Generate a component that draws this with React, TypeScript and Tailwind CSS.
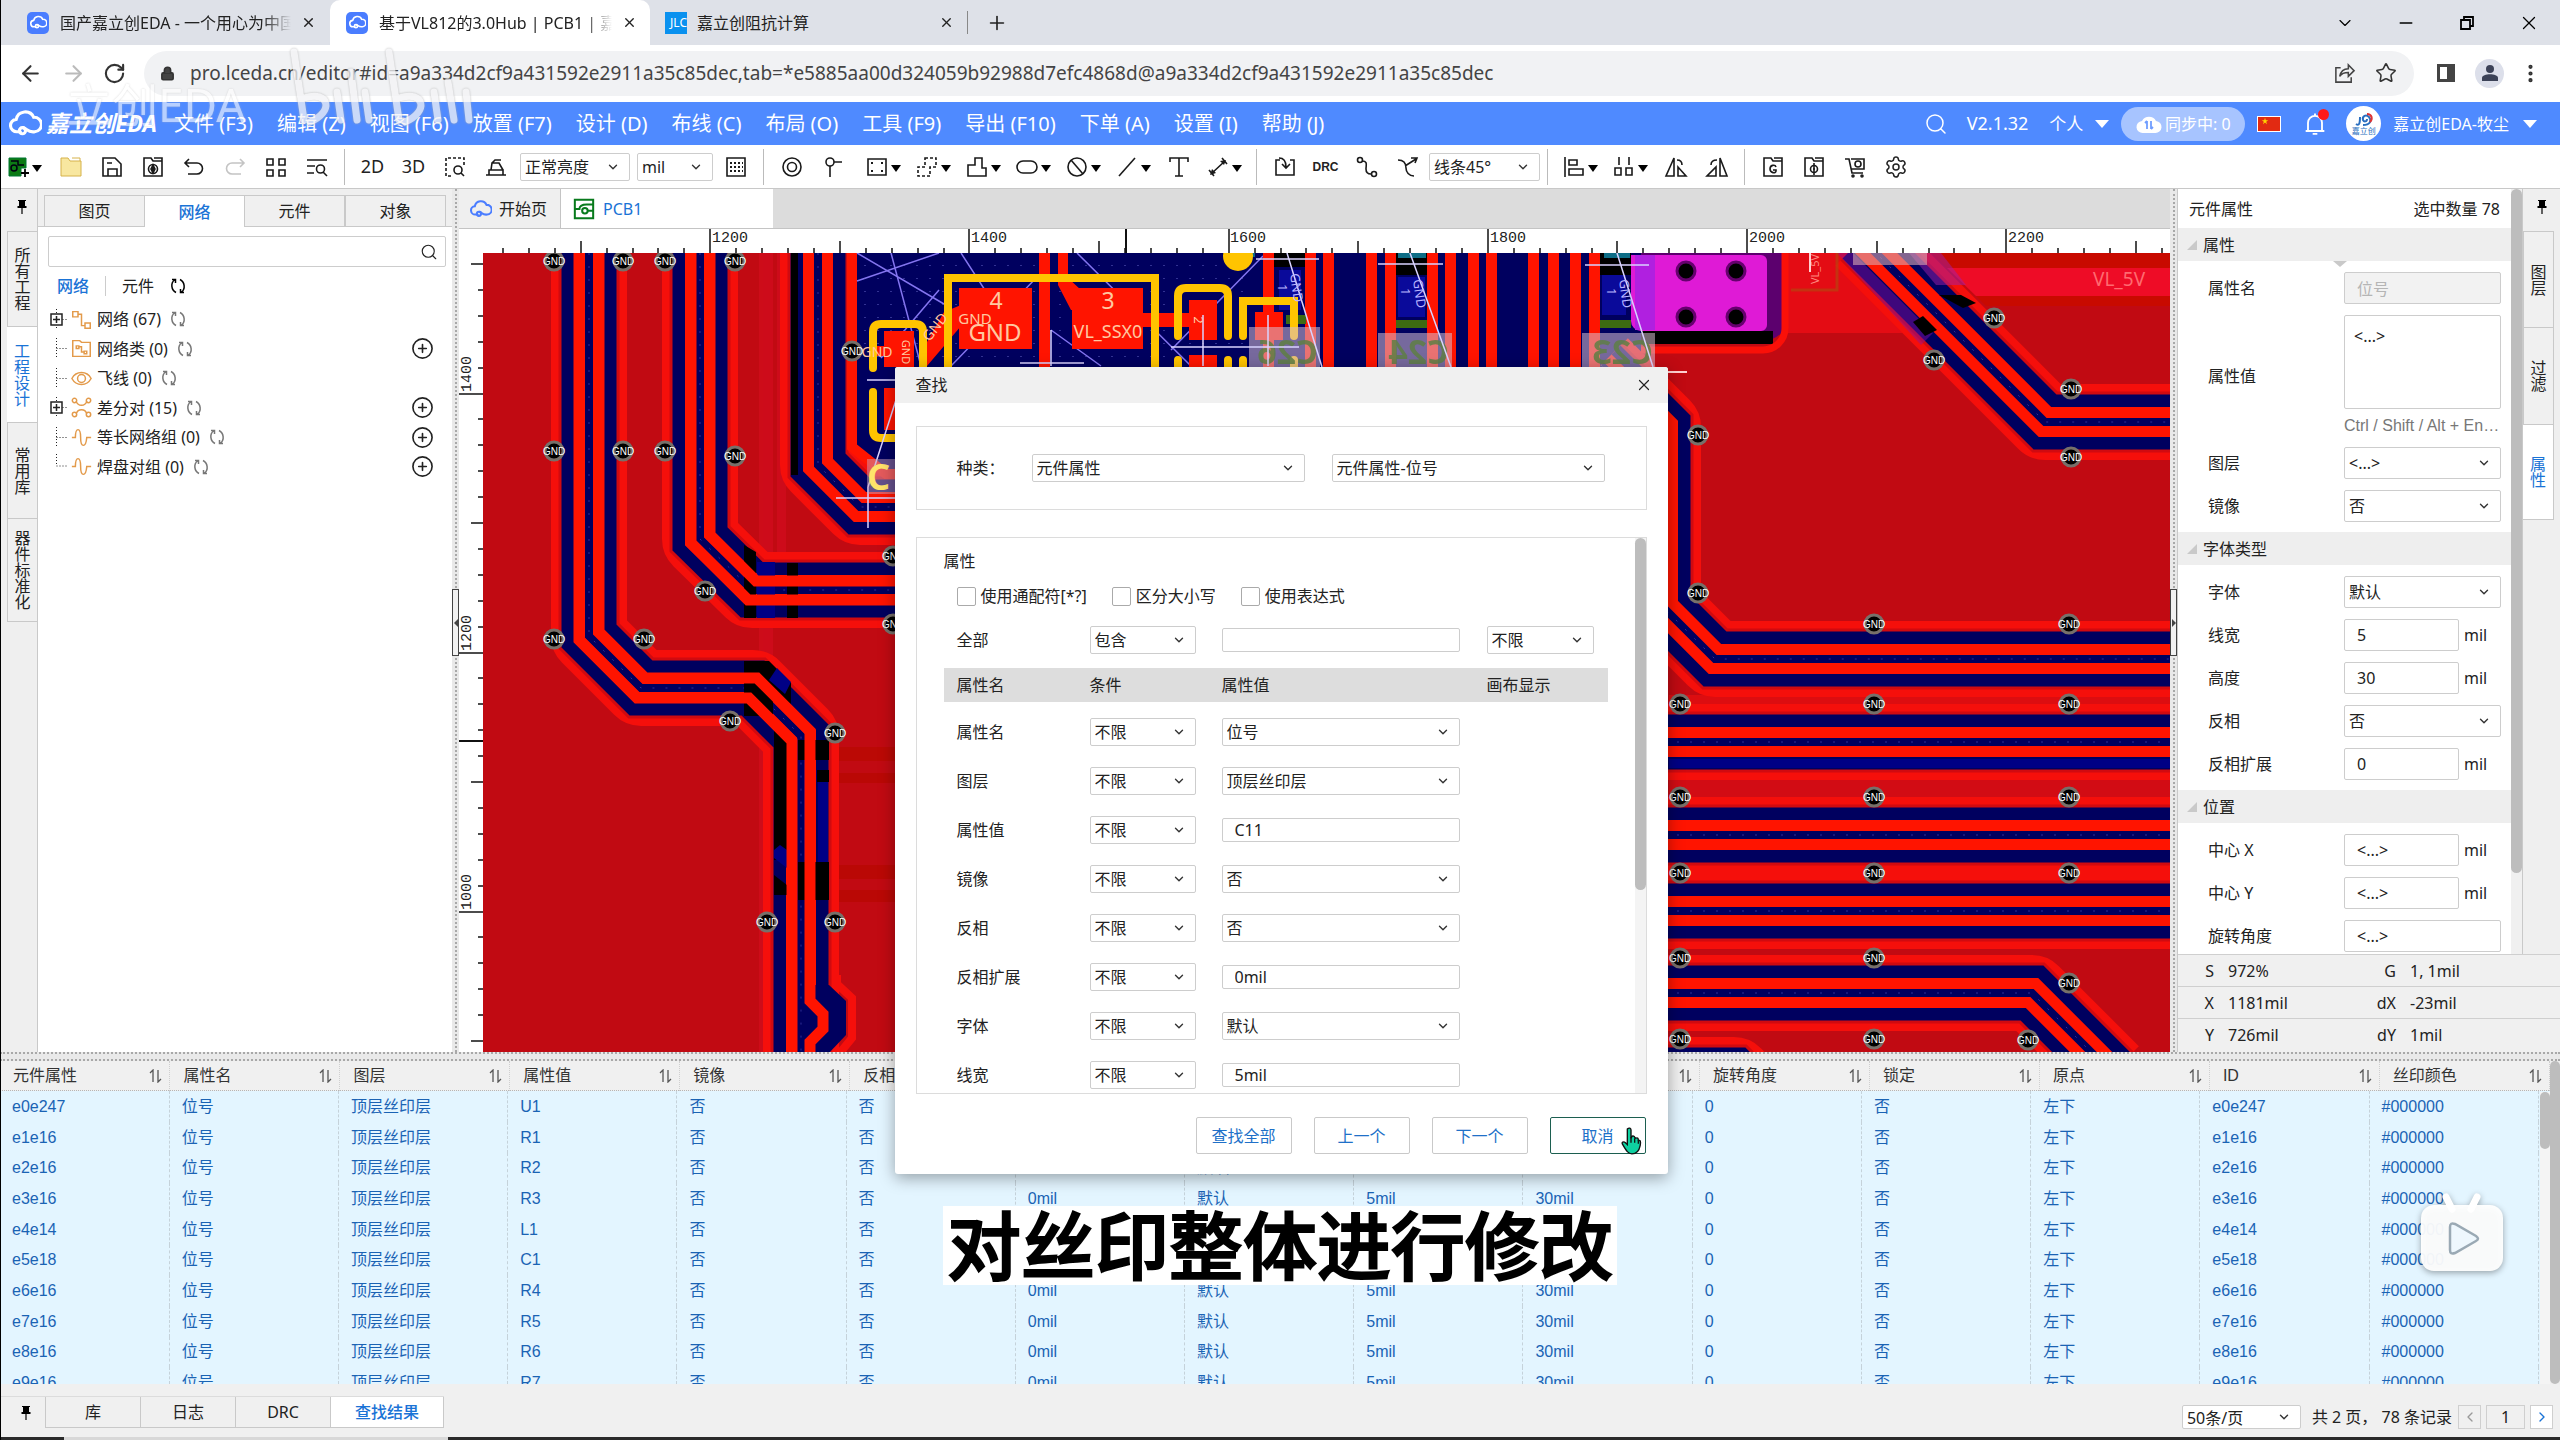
import React from "react";
import {
  ArrowLeft, ArrowRight, RotateCw, Lock, X, Plus, ChevronDown, ChevronLeft, ChevronRight,
  Minus, Star, Search, Settings, MoreVertical, CirclePlus,
} from "lucide-react";

const UI = "font-['Noto_Sans','Noto_Sans_CJK_SC',sans-serif]";
const ARIAL = "font-['Liberation_Sans','Noto_Sans_CJK_SC',sans-serif]";

/* ---------- small shared parts ---------- */

function Ic({ children, w = 24, c = "text-[#1a1a1a]", sw = 1.6 }: { children: React.ReactNode; w?: number; c?: string; sw?: number }) {
  return (
    <svg width={w} height={w} viewBox="0 0 24 24" fill="none" stroke="currentColor" strokeWidth={sw} className={"shrink-0 " + c}>
      {children}
    </svg>
  );
}

function Sel({ value, label, className = "", pad = "pl-[4px]", chev = "right-[10px]" }: { value: string; label: string; className?: string; pad?: string; chev?: string }) {
  return (
    <div className={"relative shrink-0 " + className}>
      <select aria-label={label} className={"h-full w-full appearance-none rounded-[2px] border border-[#cdcdcd] bg-white outline-none " + pad}>
        <option>{value}</option>
      </select>
      <ChevronDown size={14} strokeWidth={2.4} className={"pointer-events-none absolute top-1/2 -mt-[7px] text-[#333] " + chev} />
    </div>
  );
}

function Cloud({ w = 32, c = "text-white" }: { w?: number; c?: string }) {
  return (
    <svg width={w} height={w} viewBox="0 0 32 32" fill="none" stroke="currentColor" strokeWidth="3" className={"shrink-0 " + c}>
      <path d="M11 24H8a6 6 0 0 1-1-12 9 9 0 0 1 17-2 7 7 0 0 1 1 14c-6 1-7-2-11-4" strokeLinecap="round" />
      <circle cx="13" cy="23" r="3" />
    </svg>
  );
}

function Pin() {
  return (
    <svg width="10" height="16" viewBox="0 0 10 16" className="text-black"><path d="M1 1h8v1H8v5h1.500v2H5.600v6H4.400V9H.5V7H2V2H1z" fill="currentColor" /></svg>
  );
}

function Refresh({ dark = false }: { dark?: boolean }) {
  return (
    <svg width="18" height="18" viewBox="0 0 18 18" fill="none" stroke="currentColor" strokeWidth="1.500" className={dark ? "text-black" : "text-[#777]"}>
      <path d="M7 15.500C2 13 1.500 6 5.500 3M3 2.500h3.500V6M11 2.500c5 2.500 5.500 9.500 1.500 12.500M15 15.500h-3.500V12" />
    </svg>
  );
}

/* ---------- browser chrome ---------- */

function BrowserTabs() {
  return (
    <div className="flex h-[45px] shrink-0 bg-[#dee1e8] text-[16px] text-[#222]">
      <div className="flex w-[330px] items-center pl-[27px] pr-[14px]">
        <span className="flex size-[22px] items-center justify-center rounded-[5px] bg-[#4a7dff]"><Cloud w={17} /></span>
        <span className="ml-[11px] flex-1 overflow-hidden whitespace-nowrap [mask-image:linear-gradient(90deg,#000_88%,transparent)]">国产嘉立创EDA - 一个用心为中国人</span>
        <button aria-label="关闭标签" className="ml-[10px]"><X size={15} strokeWidth={2.200} /></button>
      </div>
      <div className="flex w-[320px] items-center rounded-t-[10px] bg-white pl-[16px] pr-[13px]">
        <span className="flex size-[22px] items-center justify-center rounded-[5px] bg-[#4a7dff]"><Cloud w={17} /></span>
        <span className="ml-[11px] flex-1 overflow-hidden whitespace-nowrap [mask-image:linear-gradient(90deg,#000_88%,transparent)]">基于VL812的3.0Hub | PCB1 | 嘉立创</span>
        <button aria-label="关闭标签" className="ml-[10px]"><X size={15} strokeWidth={2.200} /></button>
      </div>
      <div className="flex w-[318px] items-center border-r border-[#888] [border-image:linear-gradient(transparent_25%,#888_25%,#888_75%,transparent_75%)_1] pl-[15px] pr-[13px]">
        <span className="flex h-[22px] w-[22px] items-center justify-end overflow-hidden bg-[#0a91ef] text-[12px] text-white">JLC</span>
        <span className="ml-[10px] flex-1 whitespace-nowrap">嘉立创阻抗计算</span>
        <button aria-label="关闭标签"><X size={15} strokeWidth={2.200} /></button>
      </div>
      <button aria-label="新标签" className="ml-[18px]"><Plus size={22} strokeWidth={1.800} /></button>
      <div className="ml-auto flex items-center gap-[41px] pr-[20px] text-black">
        <button aria-label="标签列表"><ChevronDown size={20} strokeWidth={1.400} /></button>
        <button aria-label="最小化"><Minus size={20} strokeWidth={1.600} /></button>
        <button aria-label="还原">
          <svg width="20" height="20" viewBox="0 0 20 20" fill="none" stroke="currentColor" strokeWidth="1.800"><path d="M4 7h9v9H4zM7 7V4h9v9h-3" /></svg>
        </button>
        <button aria-label="关闭"><X size={22} strokeWidth={1.400} /></button>
      </div>
    </div>
  );
}

function AddressBar() {
  return (
    <div className="flex h-[57px] shrink-0 items-center bg-white pb-[1px] pl-[18px] pr-[18px] text-[#333]">
      <button aria-label="后退"><ArrowLeft size={25} strokeWidth={2} /></button>
      <button aria-label="前进" className="ml-[18px] text-[#bbb]"><ArrowRight size={25} strokeWidth={2} /></button>
      <button aria-label="刷新" className="ml-[17px]"><RotateCw size={23} strokeWidth={2.200} /></button>
      <div className="ml-[18px] flex h-[45px] flex-1 items-center rounded-full bg-[#f1f2f4] pl-[16px] pr-[17px]">
        <Lock size={15} fill="#444" strokeWidth={2.600} />
        <input
          aria-label="网址"
          className="ml-[15px] h-full min-w-0 flex-1 bg-transparent text-[19px] text-[#444] outline-none"
          defaultValue="pro.lceda.cn/editor#id=a9a334d2cf9a431592e2911a35c85dec,tab=*e5885aa00d324059b92988d7efc4868d@a9a334d2cf9a431592e2911a35c85dec"
        />
        <button aria-label="分享" className="mr-[19px]">
          <Ic c="text-[#444]" w={23}><path d="M8 6H3v15h16v-5M7 15c1-5 4-8 9-8V3l6 6-6 6v-4c-4 0-7 1-9 4z" /></Ic>
        </button>
        <button aria-label="收藏"><Star size={22} strokeWidth={1.700} /></button>
      </div>
      <svg width="20" height="20" viewBox="0 0 20 20" className="ml-[22px] text-[#444]"><path d="M1 1h18v18H1z" fill="currentColor" /><path d="M4 4h7v12H4z" fill="white" /></svg>
      <span className="ml-[19px] flex size-[29px] items-center justify-center rounded-full bg-[#dcdfea]">
        <svg width="18" height="18" viewBox="0 0 18 18" className="text-[#3c4257]"><circle cx="9" cy="5" r="4" fill="currentColor" /><path d="M1 17v-3c0-5 16-5 16 0v3z" fill="currentColor" /></svg>
      </span>
      <button aria-label="菜单" className="ml-[15px]"><MoreVertical size={23} strokeWidth={2.400} /></button>
    </div>
  );
}

/* ---------- application bars ---------- */

const menus = ["文件 (F3)", "编辑 (Z)", "视图 (F6)", "放置 (F7)", "设计 (D)", "布线 (C)", "布局 (O)", "工具 (F9)", "导出 (F10)", "下单 (A)", "设置 (I)", "帮助 (J)"];

function MenuBar() {
  return (
    <header className="flex h-[43px] shrink-0 items-center bg-[#4f8aff] pl-[9px] pr-[23px] text-white">
      <Cloud w={33} />
      <span className="ml-[4px] w-[128px] whitespace-nowrap text-[23px] font-bold italic">嘉立创EDA</span>
      <nav className="flex gap-[24px] text-[20px]">
        {menus.map((m) => <button key={m} className="whitespace-nowrap">{m}</button>)}
      </nav>
      <div className="ml-auto flex items-center text-[17px]">
        <Search size={24} strokeWidth={1.500} className="mr-[19px]" />
        <span className="text-[18px]">V2.1.32</span>
        <button className="ml-[21px] flex items-center gap-[12px]">个人 <span className="border-x-[7px] border-t-[8px] border-x-transparent border-t-white" /></button>
        <span className="ml-[12px] flex h-[34px] w-[124px] items-center justify-center rounded-full bg-[#a7c4ff] text-[16px]">
          <svg width="26" height="22" viewBox="0 0 26 22" className="mr-[3px]">
            <path d="M7 20a6 6 0 0 1-1-12 8 8 0 0 1 14 0 6 6 0 0 1-1 12z" fill="white" />
            <path d="M11 8v8m-2-6 2-2M15 16V8m2 6-2 2" stroke="#6f9dff" strokeWidth="1.800" fill="none" />
          </svg>
          同步中: 0
        </span>
        <span className="ml-[12px] flex h-[16px] w-[24px] border border-white bg-[#e22a12] pl-[3px]"><svg width="8" height="8" viewBox="0 0 10 10"><path d="M5 1l1 3h3L6.500 6l1 3L5 7 2.500 9l1-3L1 4h3z" fill="#ffd500" /></svg></span>
        <span className="relative ml-[20px]">
          <Ic c="text-white" w={28}><path d="M4 18h16M6 18v-7a6 6 0 0 1 12 0v7M10 20.500h4M12 3v2" /></Ic>
          <span className="absolute -top-[1px] right-0 size-[11px] rounded-full bg-[#ff1a1a]" />
        </span>
        <span className="ml-[17px] flex size-[35px] flex-col items-center justify-center rounded-full bg-white leading-none text-[#2b6fc0]">
          <svg width="20" height="14" viewBox="0 0 20 14" fill="none" strokeWidth="2"><path d="M2 11c3 2 4 0 4-7M9 12c7 0 9-4 6-8-3-3-7-1-6 3 1 2 4 2 4-1" stroke="#2b6fc0" /><path d="M13 1c5 0 6 5 3 8" stroke="#d33" /></svg>
          <span className="text-[8px]">嘉立创</span>
        </span>
        <button className="ml-[12px] flex items-center gap-[14px] whitespace-nowrap text-[16px]">嘉立创EDA-牧尘 <span className="border-x-[7px] border-t-[8px] border-x-transparent border-t-white" /></button>
      </div>
    </header>
  );
}

function Tool({ label, drop = false, children }: { label: string; drop?: boolean; children: React.ReactNode }) {
  return (
    <button aria-label={label} className={drop ? "flex h-full w-[50px] shrink-0 items-center justify-center" : "flex h-full w-[41px] shrink-0 items-center justify-center"}>
      {children}
      {drop && <span className="mt-[4px] ml-[2px] border-x-[5px] border-t-[7px] border-x-transparent border-t-black" />}
    </button>
  );
}

const Sep = () => <span className="mx-[7px] h-[36px] w-px shrink-0 bg-[#bbb]" />;

function Toolbar() {
  return (
    <div className="flex h-[44px] shrink-0 items-center border-b border-[#c8c8c8] bg-white text-[16px] text-[#222]">
      <Tool label="新建" drop>
        <svg width="22" height="22" viewBox="0 0 22 22" fill="none"><path d="M1 2h17v10h-5v8H1z" fill="#0c7a14" stroke="#073" /><circle cx="6" cy="12" r="3" stroke="#001" strokeWidth="1.500" /><path d="M3 5h7v4h6" stroke="#001" strokeWidth="1.500" /><path d="M17 13v8M13 17h8" stroke="#000" strokeWidth="1.800" /></svg>
      </Tool>
      <Tool label="打开"><svg width="22" height="22" viewBox="0 0 22 22"><path d="M1 2h7l2 3h11v15H1z" fill="#f8e7a0" stroke="#d6b24a" /><path d="M12 2h8v3" fill="none" stroke="#d6b24a" /></svg></Tool>
      <Tool label="保存"><Ic><path d="M3 3h12l6 6v12H3zM8 21v-7h9v7M7 8h5" /></Ic></Tool>
      <Tool label="工程另存"><Ic><path d="M3 21V3h7l2 3h9v15zM13 3h8v3" /><circle cx="12" cy="14" r="4.500" /><path d="M12 10l2 4-2 4-2-4z" fill="currentColor" /></Ic></Tool>
      <Tool label="撤销"><Ic><path d="M7 4 3 8l4 4M3 8h12a5 5 0 0 1 0 11H6" /></Ic></Tool>
      <Tool label="重做"><Ic c="text-[#c4c4c4]"><path d="m17 4 4 4-4 4M21 8H9a5 5 0 0 0 0 11h9" /></Ic></Tool>
      <Tool label="布局网格"><Ic><path d="M3 4h6v6H3zM15 4h6v6h-6zM3 15h6v6H3zM15 15h6v6h-6z" /></Ic></Tool>
      <Tool label="查找"><Ic><path d="M2 5h20M2 11h8M2 18h7" /><circle cx="15.500" cy="14" r="4" /><path d="m18 17 4 4" /></Ic></Tool>
      <Sep />
      <Tool label="二维"><span className="text-[18px]">2D</span></Tool>
      <Tool label="三维"><span className="text-[18px]">3D</span></Tool>
      <Tool label="框选查找"><Ic><path d="M8 21H3V3h18v7" strokeDasharray="3 2" /><circle cx="15" cy="15" r="4" /><path d="m18 18 3 3" /></Ic></Tool>
      <Tool label="擦除"><Ic><path d="M2 20h20M5 20v-5h14v5M7 15l1-7h7l4 7M8 8l3-3h6" /></Ic></Tool>
      <Sel label="亮度" value="正常亮度" className="ml-[4px] h-[28px] w-[110px]" />
      <Sel label="单位" value="mil" className="ml-[7px] mr-[2px] h-[28px] w-[76px]" />
      <Tool label="网格"><Ic><path d="M3 3h18v18H3z" /><path d="M6 8h13M6 12h13M6 16h13" strokeDasharray="2 2" strokeWidth="2" /></Ic></Tool>
      <Sep />
      <Tool label="焊盘"><Ic><circle cx="12" cy="12" r="9" /><circle cx="12" cy="12" r="4.500" /></Ic></Tool>
      <Tool label="过孔"><Ic><circle cx="9" cy="7" r="4" /><path d="M13 7h8M9 11v11" /></Ic></Tool>
      <span className="w-[5px] shrink-0" />
      <Tool label="铺铜" drop><Ic><path d="M3 4h18v16H3z" /><path d="M6 7h2v2H6zM16 7h2v2h-2zM6 15h2v2H6zM16 15h2v2h-2z" fill="currentColor" stroke="none" /></Ic></Tool>
      <Tool label="禁止区域" drop><Ic><path d="M10 3h11v9h-6v9H3v-9h7z" strokeDasharray="3 2" /></Ic></Tool>
      <Tool label="板框" drop><Ic><path d="M3 21V10h7V3h7v10h4v8z" /></Ic></Tool>
      <Tool label="槽" drop><Ic><rect x="2" y="6" width="20" height="12" rx="6" /></Ic></Tool>
      <Tool label="禁布" drop><Ic><circle cx="12" cy="12" r="9" /><path d="m6 5 12 14" /></Ic></Tool>
      <Tool label="线" drop><Ic><path d="M4 21 20 3" /></Ic></Tool>
      <Tool label="文本"><Ic><path d="M3 7V3h18v4M12 3v18M8 21h8" /></Ic></Tool>
      <Tool label="尺寸" drop><Ic><path d="M5 19 19 6M3 15l5 6M16 3l5 6" /><path d="M4 20l2-6 4 4zM20 5l-6 1 4 4z" fill="currentColor" stroke="none" /></Ic></Tool>
      <Sep />
      <Tool label="导入"><Ic><path d="M7 5H3v15h18V5h-4M6 3c5 0 7 3 7 9M9 9l4 4 4-4" /></Ic></Tool>
      <Tool label="设计规则检查"><span className="font-['Liberation_Sans'] text-[12px] font-bold">DRC</span></Tool>
      <Tool label="网络"><Ic><circle cx="5" cy="5" r="2.500" /><circle cx="19" cy="19" r="2.500" /><path d="M7 6c6 0 4 4 4 8s2 5 5 5" /></Ic></Tool>
      <Tool label="扇出"><Ic><path d="M2 5c6 0 8 4 8 8s3 8 8 8M9 11 20 4M15 3l6 0-2 5" /></Ic></Tool>
      <Sel label="走线角度" value="线条45°" className="ml-px h-[28px] w-[111px]" />
      <Sep />
      <Tool label="对齐" drop><Ic><path d="M3 2v20M7 5h8v5H7zM7 14h14v6H7z" /></Ic></Tool>
      <Tool label="分布" drop><Ic><path d="M7 2v8M17 2v8M3 13h6v7H3zM14 13h6v7h-6z" /></Ic></Tool>
      <Tool label="左右翻转"><Ic><path d="M10 3v18H2zM14 12v9h8zM13 5c4 0 5 2 5 5" /></Ic></Tool>
      <Tool label="上下翻转"><Ic><path d="M15 3v18h7zM11 12v9H2zM6 10c0-3 2-5 6-5" /></Ic></Tool>
      <Sep />
      <Tool label="导出Gerber"><Ic><path d="M3 21V3h7l2 3h9v15zM13 3h8v3" /><path d="M15 12c-1-3-6-2-6 2s6 5 6 2v-1h-3" /></Ic></Tool>
      <Tool label="坐标文件"><Ic><path d="M3 21V3h7l2 3h9v15zM13 3h8v3" /><circle cx="12" cy="14" r="3.500" /><path d="M12 8v12M11 14h2" /></Ic></Tool>
      <Tool label="下单"><Ic><path d="M2 4h4l3 14h11M8 4h13v10H8" /><circle cx="15" cy="9" r="3" /><circle cx="10" cy="21" r="1" /><circle cx="19" cy="21" r="1" /></Ic></Tool>
      <Tool label="设置"><Settings size={24} strokeWidth={1.500} /></Tool>
    </div>
  );
}

/* ---------- left dock ---------- */

function SideTab({ text, active = false, size }: { text: string; active?: boolean; size: string }) {
  return (
    <button className={"flex w-full items-center justify-center border-[#c9c9c9] leading-[16px] " + size + (active ? " border-b bg-white text-[#1a73d6]" : " border-b border-l bg-[#f0f0f0] text-[#222]")}>
      <span className="w-[16px] break-all text-[16px]">{text}</span>
    </button>
  );
}

type Node = { label: string; icon: React.ReactNode; plus?: boolean; expand?: boolean };
const tree: Node[] = [
  { label: "网络 (67)", expand: true, icon: <path d="M2 3h6v6H2zM16 16h6v6h-6zM8 6h4v13h4" /> },
  { label: "网络类 (0)", plus: true, icon: <path d="M2 21V3h8l2 2h10v16zM6 9h3v3H6zM15 15h3v3h-3zM9 10h3v6h3" /> },
  { label: "飞线 (0)", icon: <><path d="M1 12c5-9 17-9 22 0-5 9-17 9-22 0z" /><circle cx="12" cy="12" r="4.500" /></> },
  { label: "差分对 (15)", plus: true, expand: true, icon: <><circle cx="4" cy="4" r="2.500" /><circle cx="20" cy="4" r="2.500" /><circle cx="4" cy="20" r="2.500" /><circle cx="20" cy="20" r="2.500" /><path d="M6 5c2 6 10 6 12 0M6 19c2-6 10-6 12 0" /></> },
  { label: "等长网络组 (0)", plus: true, icon: <path d="M1 12h4c0-12 6-12 6 0s6 12 7 0h5" /> },
  { label: "焊盘对组 (0)", plus: true, icon: <path d="M1 12h4c0-12 6-12 6 0s6 12 7 0h5" /> },
];

function LeftDock() {
  return (
    <aside className="flex w-[452px] shrink-0 bg-[#efefef] text-[16px] text-[#222]">
      <div className="flex w-[38px] flex-col border-r border-[#c9c9c9] pl-[7px]">
        <div className="flex h-[43px] items-center justify-center border-b border-[#c9c9c9] pb-[6px]"><Pin /></div>
        <SideTab text="所有工程" size="h-[95px]" />
        <SideTab text="工程设计" size="h-[96px]" active />
        <SideTab text="常用库" size="h-[96px]" />
        <SideTab text="器件标准化" size="h-[103px]" />
      </div>
      <div className="flex flex-1 flex-col">
        <div className="flex h-[38px] items-end border-b border-[#c9c9c9] px-[6px]">
          {["图页", "网络", "元件", "对象"].map((t) => (
            <button key={t} className={t === "网络" ? "-mb-px h-[32px] flex-1 border-t border-[#c9c9c9] bg-white font-medium text-[#1a73d6]" : "h-[31px] flex-1 border-x border-t border-[#c9c9c9] bg-[#f0f0f0]"}>{t}</button>
          ))}
        </div>
        <div className="flex-1 bg-white pl-[10px] pr-[6px] pt-[9px]">
          <div className="flex h-[31px] items-center rounded-[2px] border border-[#cdcdcd] pr-[7px]">
            <input aria-label="搜索网络" className="h-full flex-1 px-2 outline-none" />
            <Search size={18} strokeWidth={1.500} />
          </div>
          <div className="flex h-[37px] items-center pl-[9px]">
            <button className="font-medium text-[#1a73d6]">网络</button>
            <span className="mx-[16px] h-[20px] w-px bg-[#ccc]" />
            <button>元件</button>
            <button aria-label="刷新" className="ml-[15px]"><Refresh dark /></button>
          </div>
          <ul>
            {tree.map((n, i) => (
              <li key={n.label} className={"flex items-center " + (i % 2 ? "h-[29px]" : "h-[30px]")}>
                <span className="flex h-full w-[23px] items-center">
                  <svg width="23" height="29" viewBox="0 0 23 29" fill="none" stroke="#222">
                    <path d={i === 5 ? "M8.500 2v12H20" : "M8.500 4v21M8.500 14.500H20"} strokeDasharray="1 2" />
                    {n.expand && <><rect x="3" y="9" width="11" height="11" fill="white" strokeWidth="1.500" /><path d="M5 14.500h7M8.500 11v7" strokeWidth="1.500" /></>}
                  </svg>
                </span>
                <Ic w={21} c="text-[#e39a4a]" sw={1.700}>{n.icon}</Ic>
                <span className="ml-[5px] mr-[8px]">{n.label}</span>
                <Refresh />
                {n.plus && <button aria-label="新建" className="ml-auto mr-[12px]"><CirclePlus size={23} strokeWidth={1.700} /></button>}
              </li>
            ))}
          </ul>
        </div>
      </div>
    </aside>
  );
}

function Splitter({ arrow }: { arrow: "l" | "r" }) {
  return (
    <div className="relative w-[7px] shrink-0 bg-[#e9e9e9]">
      <div className="mx-auto h-full w-0 border-l-2 border-dotted border-[#a8a8a8]" />
      <div className="absolute inset-x-0 top-[400px] flex h-[67px] items-center justify-center border border-[#444] bg-[#f2f2f2]">
        <span className={arrow === "l" ? "border-y-4 border-r-4 border-y-transparent border-r-[#444]" : "border-y-4 border-l-4 border-y-transparent border-l-[#444]"} />
      </div>
    </div>
  );
}

/* ---------- PCB canvas ---------- */

const RED = "#ff1400";
const NAVY = "#00005f";
const POUR = "#c10a12";

function Pair({ d }: { d: string }) {
  return (
    <g fill="none" strokeLinejoin="miter">
      <path d={d} stroke="#f50f0b" strokeWidth="76" strokeLinejoin="round" />
      <path d={d} stroke="#d00a10" strokeWidth="61" />
      <path d={d} stroke={NAVY} strokeWidth="55" />
      <path d={d} stroke={RED} strokeWidth="30" />
      <path d={d} stroke={NAVY} strokeWidth="8" />
      <path d={d} stroke="#5c5cc8" strokeWidth="1" strokeDasharray="2 11" opacity="0.500" />
    </g>
  );
}

const vias: [number, number][] = [
  [553, 261], [553, 451], [553, 639], [622, 261], [622, 451], [643, 639], [664, 261], [664, 451], [704, 591],
  [734, 261], [734, 456], [729, 721], [834, 733], [766, 922], [834, 922], [851, 351], [892, 556], [892, 624],
  [1697, 435], [1697, 593], [1873, 624], [2068, 624], [1679, 704], [1873, 704], [2068, 704], [1679, 797],
  [1873, 797], [2068, 797], [1679, 873], [1873, 873], [2068, 873], [1679, 958], [1873, 958], [2068, 983],
  [1679, 1039], [1873, 1039], [2027, 1040], [1993, 318], [1933, 360], [2070, 389], [2070, 457],
];

const pairs = [
  "M588 240V636L640 688H752L800 736V1060",
  "M699 240V539L751 590H900",
  "M1600 365L1662 427V607L1714 659H2180",
  "M1650 742H2180",
  "M1650 835H2180",
  "M1650 911H2180",
  "M1650 993H2031L2111 1073",
  "M1650 1075H1733L1780 1122",
  "M1861 239L2044 422H2180",
];

const topTraces = [1262, 1304, 1322, 1365, 1384, 1426, 1444, 1467, 1485, 1527, 1547, 1569, 1588];

function Ruler() {
  const h = Array.from({ length: 66 }, (_, i) => ({ x: Math.round(476 + i * 25.92), k: i + 1 }));
  const v = Array.from({ length: 31 }, (_, i) => ({ y: Math.round(264 + i * 25.9), k: i }));
  return (
    <g>
      <rect x="458" y="229" width="1712" height="24" fill="#fff" />
      <rect x="458" y="229" width="24" height="830" fill="#fff" />
      <g stroke="#111" strokeWidth="1.500">
        {h.map(({ x, k }) => (x > 490 ? <path key={x} d={`M${x} ${k % 10 === 0 ? 229 : k % 5 === 0 ? 241 : 248}V253`} /> : null))}
        {v.map(({ y, k }) => <path key={y} d={`M${k % 10 === 5 ? 458 : k % 5 === 0 ? 470 : 477} ${y}H482`} />)}
        <path d="M1125 229V253M458 741H482" strokeWidth="2" />
      </g>
      <g fontSize="15" fill="#222" fontFamily="Liberation Mono, monospace">
        {[1200, 1400, 1600, 1800, 2000, 2200].map((n, i) => <text key={n} x={Math.round(711 + i * 259.2)} y="242">{n}</text>)}
        {[1400, 1200, 1000].map((n, i) => <text key={n} transform={`translate(470 ${392 + i * 259}) rotate(-90)`}>{n}</text>)}
      </g>
    </g>
  );
}

function Board() {
  return (
    <svg className="block h-full w-full" viewBox="458 229 1712 823" preserveAspectRatio="xMinYMin slice" fontFamily="Noto Sans, sans-serif">
      <defs>
        <pattern id="dots" width="13" height="13" patternUnits="userSpaceOnUse"><rect x="5" y="5" width="2" height="1" fill="#6f6fd0" opacity="0.450" /></pattern>
      </defs>
      <rect x="458" y="229" width="1712" height="823" fill={POUR} />
      <g fill="#d00c1c" opacity="0.800"><rect x="758" y="253" width="14" height="800" /><rect x="776" y="253" width="9" height="350" /></g>
      <g fill="#b80800" opacity="0.700"><rect x="838" y="747" width="60" height="14" /><rect x="838" y="773" width="60" height="10" /><rect x="838" y="865" width="60" height="14" /><rect x="838" y="890" width="60" height="12" /></g>
      <rect x="1668" y="695" width="502" height="12" fill="#dc0d10" />
      <rect x="1668" y="775" width="502" height="27" fill="#d20c14" />

      <path d="M851 253H1640V430H900L851 447Z" fill={NAVY} />
      <Pair d="M817 240V465L859 507H900" />
      <rect x="790" y="253" width="7" height="222" fill="#000" />
      <path d="M855 253V447L880 472H900V253Z" fill={NAVY} />
      <path d="M851 240V447L885 474H900" fill="none" stroke={RED} strokeWidth="10" />

      <g fill="none" strokeLinejoin="round">
        <path d="M1640 253H1790V310a32 32 0 0 1 -32 32H1640Z" fill="#5c006e" />
        <path d="M1640 331H1772V344H1640Z" fill="#000" />
        <path d="M1640 344H1784V253H1900L1990 342V356H1640Z" fill={POUR} />
        <path d="M1784 253H1890L1974 333H1784Z" fill="#e40c14" />
        <path d="M1930 253H2170V268H1946Z" fill="#c80a00" />
        <path d="M1946 268H2170V296H1975Z" fill="#ee0c26" />
        <path d="M1975 296H2170V306H1985Z" fill="#c80a00" />
        <path d="M1640 350H1762a22 22 0 0 0 22 -22V253" stroke="#fa1008" strokeWidth="7" />
      </g>
      {pairs.map((d) => <Pair key={d} d={d} />)}
      <path d="M1836 253H1852L1932 333L1920 345Z" fill="#8a10a0" opacity="0.450" />
      <path d="M1908 253H1940L1965 285H1935Z" fill="#a020a8" opacity="0.500" />
      <path d="M1912 322L1922 316L1936 330L1924 336Z" fill="#000" />
      <path d="M1938 295H1960L1975 303L1962 308Z" fill="#000" />
      <rect x="1852" y="253" width="74" height="12" fill="#d9a9b0" opacity="0.600" />
      <text x="2092" y="286" fontSize="19" fill="#ff6a70">VL_5V</text>
      <path d="M1790 290H1836V253" fill="none" stroke="#b84310" strokeWidth="3" opacity="0.700" />
      <text transform="translate(1818 284) rotate(-90)" fontSize="11" fill="#ff8a80">VL_5V</text>
      <path d="M1809 253V272M1640 372H1686" stroke="#ffd0d0" strokeWidth="2" />

      <g fill="none">
        <path d="M836 975V984L851 998V1038L838 1054" stroke="#f50f0b" strokeWidth="8" />
        <path d="M804 985H828L845 1001V1035L828 1053H804Z" fill={NAVY} />
      </g>
      <g fill="#000">
        <path d="M743 661H768L790 683V704L772 692V716L743 716Z" />
        <path d="M773 722L786 734V860H773ZM797 740H828V760H797ZM816 770H828V782H816ZM797 862H828V900H797ZM773 875L786 885V895H773Z" />
        <path d="M743 545L755 552V618H743ZM786 563H797V618H786Z" />
      </g>
      <g fill="#000085">
        <path d="M776 668L790 682L784 694L768 680ZM779 845L786 850V868L773 858V850ZM817 782H827V862H817ZM756 562H774V618H756ZM803 760H814V860H803Z" />
        <rect x="1668" y="759" width="502" height="9" />
      </g>
      <g fill="none" stroke={RED} strokeWidth="11">
        <path d="M690 253V543L747 600H900M709 253V535L755 581H900" />
        <path d="M578 253V640L636 698H748L791 741V1053M598 253V632L644 678H756L809 731V1001L822 1014V1029L809 1042V1053" />
      </g>

      <g stroke="#8475f0" strokeWidth="1.500" fill="none">
        <path d="M856 253L943 304M938 253L856 281M890 253L920 366M960 253L1002 318M880 358L938 290M1038 275L950 366M1076 253L1190 366M1170 350L1262 256M1050 330L1100 366" />
      </g>
      <rect x="852" y="253" width="390" height="115" fill="url(#dots)" />
      <g fill={RED}>
        <rect x="1038" y="253" width="11" height="115" />
        <path d="M1057 253H1067V278L1080 290V310H1070L1057 285ZM1140 313H1190V327H1140ZM943 312L926 342V366L960 326V305Z" />
        <rect x="958" y="288" width="73" height="61" /><rect x="1071" y="288" width="71" height="61" />
        <rect x="1188" y="300" width="28" height="40" /><rect x="1188" y="355" width="28" height="12" />
        {topTraces.map((x) => <rect key={x} x={x} y="253" width="11" height="115" />)}
        <rect x="883" y="331" width="30" height="36" /><rect x="883" y="388" width="30" height="42" /><rect x="868" y="346" width="20" height="10" />
      </g>
      <g fill="#000"><rect x="1273" y="253" width="31" height="14" /><rect x="1395" y="253" width="31" height="22" /><rect x="1599" y="253" width="31" height="22" /></g>
      <g fill="#3d6a12"><rect x="1285" y="315" width="20" height="9" /><rect x="1395" y="320" width="31" height="8" /><rect x="1599" y="320" width="31" height="8" /></g>
      <g fill="#0a0a9a"><rect x="1278" y="270" width="22" height="40" /><rect x="1397" y="277" width="27" height="40" /><rect x="1601" y="275" width="24" height="40" /></g>
      <g fill="#0d6d86"><rect x="1226" y="253" width="28" height="4" /><rect x="1397" y="253" width="28" height="5" /><rect x="1603" y="253" width="26" height="5" /></g>

      <path d="M1630 255H1760a6 6 0 0 1 6 6V325a6 6 0 0 1 -6 6H1640a10 10 0 0 1 -10 -10Z" fill="#df1ad6" />
      <rect x="1634" y="255" width="20" height="75" fill="#b020e0" />
      {[[1685, 271], [1735, 271], [1685, 317], [1735, 317]].map(([x, y]) => <circle key={`${x}-${y}`} cx={x} cy={y} r="9" fill="#000" stroke="#66006e" strokeWidth="3" />)}

      <g fill="none" stroke="#ffc400" strokeWidth="8" strokeLinecap="round" strokeLinejoin="round">
        <path d="M947 368V278H1154V368" strokeLinejoin="miter" />
        <path d="M1177 336V296Q1177 288 1185 288H1219Q1227 288 1227 296V336M1177 360V368M1227 360V368" />
        <path d="M1242 336V301H1293V336M1242 360V368M1293 360V368" strokeLinejoin="miter" />
        <path d="M872 368V332Q872 324 880 324H914Q922 324 922 332V368M872 392V430Q872 438 880 438H900" />
      </g>
      <circle cx="1237" cy="256" r="15" fill="#ffc400" />
      <rect x="1254" y="312" width="28" height="28" fill={RED} />
      <g fill="#d8c0d0" opacity="0.550"><rect x="1248" y="327" width="71" height="41" /><rect x="1377" y="333" width="74" height="35" /><rect x="1581" y="333" width="73" height="35" /></g>
      <g fontSize="34" fontWeight="700" fill="#5f7f45" opacity="0.850">
        <text transform="translate(1448 364) scale(-1 1)">C24</text>
        <text transform="translate(1652 364) scale(-1 1)">C23</text>
        <text transform="translate(1317 364) scale(-1 1)">C26</text>
      </g>
      <g stroke="#d9d2ff" strokeWidth="1.500" fill="none">
        <path d="M1255 259H1318M1286 253L1321 367M1377 264H1442M1409 253L1450 367M1584 265H1648M1616 253L1652 367M1050 330V366M1019 363H1083M1202 315V366M1170 347H1298M1267 315V366M866 380H900M867 487V528M835 498H900M867 487L895 400" />
      </g>
      <rect x="866" y="459" width="34" height="35" fill="#c9a0b8" opacity="0.500" />
      <text x="866" y="490" fontSize="36" fontWeight="700" fill="#ffe36a">C</text>
      <g fill="#ffc8a0" fontSize="20" textAnchor="middle">
        <text x="995" y="309" fontSize="23">4</text><text x="994" y="341" fontSize="24">GND</text><text x="974" y="324" fontSize="15">GND</text>
        <text x="1107" y="309" fontSize="23">3</text><text x="1107" y="338" fontSize="18">VL_SSX0</text>
        <text x="876" y="357" fontSize="14">GND</text>
        <text transform="translate(901 352) rotate(90)" fontSize="11">GND</text>
        <text transform="translate(938 330) rotate(-52)" fontSize="14">GND</text>
        <text transform="translate(1193 320) rotate(90)" fontSize="13">2</text>
      </g>
      <g fill="#b9b4ff" fontSize="13">
        <text transform="translate(1289 274) rotate(82)">GND</text><text transform="translate(1412 280) rotate(82)">GND</text><text transform="translate(1618 280) rotate(82)">GND</text>
        <text transform="translate(1277 284) rotate(90)">1</text><text transform="translate(1400 288) rotate(90)">1</text><text transform="translate(1606 288) rotate(90)">1</text>
      </g>

      <g fontSize="10" textAnchor="middle" fill="#fff" fontFamily="Liberation Sans, sans-serif">
        {vias.map(([x, y]) => (
          <g key={`${x}-${y}`}><circle cx={x} cy={y} r="9" fill="#000" stroke="#77706a" strokeWidth="3" /><text x={x} y={y + 4}>GND</text></g>
        ))}
      </g>
      <Ruler />
    </svg>
  );
}

function Editor() {
  return (
    <main className="flex min-w-0 flex-1 flex-col">
      <div className="flex h-[40px] shrink-0 border-b border-[#c4c4c4] bg-[#dcdcdc] text-[16px]">
        <button className="flex w-[101px] items-center gap-[7px] bg-[#efefef] pl-[11px] text-[#222]"><Cloud w={22} c="text-[#4a7dff]" />开始页</button>
        <button className="flex w-[213px] items-center gap-[8px] border-l border-[#c4c4c4] bg-white pl-[12px] text-[#1a73d6]">
          <Ic w={22} c="text-[#087a1c]" sw={2.200}><path d="M2 2h20v20H2z" /><circle cx="13" cy="14" r="3" /><path d="M16 14h6M2 12h5c0-4 3-5 8-5h7" /></Ic>
          PCB1
        </button>
      </div>
      <div className="min-h-0 flex-1"><Board /></div>
    </main>
  );
}

/* ---------- right dock ---------- */

function Section({ title }: { title: string }) {
  return <h3 className="flex h-[33px] items-center gap-[6px] bg-[#eeeeee] pl-[9px]"><span className="border-b-[10px] border-l-[10px] border-b-[#c9c9c9] border-l-transparent" />{title}</h3>;
}

function Field({ label, value, kind = "text" }: { label: string; value: string; kind?: "text" | "mil" | "select" | "disabled" }) {
  return (
    <div className="flex h-[32px] items-center pl-[30px] pr-[11px]">
      <label className="w-[136px] shrink-0" htmlFor={label}>{label}</label>
      {kind === "select" ? (
        <Sel label={label} value={value} className="h-full w-[157px]" />
      ) : (
        <input
          id={label}
          defaultValue={value}
          disabled={kind === "disabled"}
          className={"h-full rounded-[2px] border border-[#cdcdcd] px-[12px] outline-none disabled:bg-[#f2f2f2] disabled:text-[#b5b5b5] " + (kind === "mil" ? "w-[115px]" : "w-[157px]")}
        />
      )}
      {kind === "mil" && <span className="ml-[5px]">mil</span>}
    </div>
  );
}

function RightDock() {
  return (
    <aside className="flex w-[383px] shrink-0 flex-col border-l border-[#c9c9c9] bg-[#efefef] text-[16px] text-[#222]">
      <div className="flex min-h-0 flex-1">
        <div className="flex min-w-0 flex-1 flex-col overflow-hidden bg-white">
          <h2 className="flex h-[39px] shrink-0 items-center justify-between pl-[11px] pr-[11px]"><span>元件属性</span><span>选中数量 78</span></h2>
          <Section title="属性" />
          <span className="-mb-[6px] ml-[155px] w-0 border-x-[7px] border-t-[6px] border-x-transparent border-t-[#c9c9c9]" />
          <div className="flex flex-col gap-[11px] pb-[10px] pt-[11px]">
            <Field label="属性名" value="位号" kind="disabled" />
            <div className="flex pl-[30px]">
              <label htmlFor="pv" className="w-[136px] self-center">属性值</label>
              <div className="w-[157px]">
                <textarea id="pv" defaultValue="<...>" className="block h-[94px] w-full resize-none rounded-[2px] border border-[#cdcdcd] px-[9px] py-[8px] outline-none" />
                <p className={"h-[27px] truncate pt-[5px] text-[#777] " + ARIAL}>Ctrl / Shift / Alt + Enter</p>
              </div>
            </div>
            <Field label="图层" value="<...>" kind="select" />
            <Field label="镜像" value="否" kind="select" />
          </div>
          <Section title="字体类型" />
          <div className="flex flex-col gap-[11px] pb-[10px] pt-[11px]">
            <Field label="字体" value="默认" kind="select" />
            <Field label="线宽" value="5" kind="mil" />
            <Field label="高度" value="30" kind="mil" />
            <Field label="反相" value="否" kind="select" />
            <Field label="反相扩展" value="0" kind="mil" />
          </div>
          <Section title="位置" />
          <div className="flex flex-col gap-[11px] pt-[11px]">
            <Field label="中心 X" value="<...>" kind="mil" />
            <Field label="中心 Y" value="<...>" kind="mil" />
            <Field label="旋转角度" value="<...>" />
          </div>
        </div>
        <div className="w-[11px] bg-[#f0f0f0]"><div className="h-[684px] rounded-full bg-[#bdbdbd]" /></div>
        <div className="flex w-[38px] flex-col border-l border-[#c9c9c9] pr-[6px]">
          <div className="flex h-[43px] items-center justify-center border-b border-[#c9c9c9] pb-[6px] pl-[6px]"><Pin /></div>
          <SideTab text="图层" size="h-[96px] border-r" />
          <SideTab text="过滤" size="h-[97px] border-r" />
          <SideTab text="属性" size="h-[95px] border-r" active />
        </div>
      </div>
      <dl className="grid shrink-0 grid-cols-[50px_142px_40px_1fr] bg-[#f0f0f0] pb-[2px] [&>*]:flex [&>*]:h-[32px] [&>*]:items-center [&>*]:border-t [&>*]:border-[#cfcfcf] [&>dt]:justify-end [&>dt]:pr-[14px]">
        <dt>S</dt><dd>972%</dd><dt>G</dt><dd>1, 1mil</dd>
        <dt>X</dt><dd>1181mil</dd><dt>dX</dt><dd>-23mil</dd>
        <dt>Y</dt><dd>726mil</dd><dt>dY</dt><dd>1mil</dd>
      </dl>
    </aside>
  );
}

/* ---------- results table ---------- */

const heads = ["元件属性", "属性名", "图层", "属性值", "镜像", "反相", "反相扩展", "字体", "线宽", "高度", "旋转角度", "锁定", "原点", "ID", "丝印颜色"];
const results = [["e0e247", "U1"], ["e1e16", "R1"], ["e2e16", "R2"], ["e3e16", "R3"], ["e4e14", "L1"], ["e5e18", "C1"], ["e6e16", "R4"], ["e7e16", "R5"], ["e8e16", "R6"], ["e9e16", "R7"]];

function Results() {
  return (
    <section className="flex shrink-0 flex-col">
      <div className="h-[9px] border-y-2 border-dotted border-[#a8a8a8] bg-[#e9e9e9]" />
      <div className="flex h-[323px] overflow-hidden">
        <div className="relative min-w-0 flex-1">
          <table className={"block w-full text-[16px] " + ARIAL}>
            <thead className="block">
              <tr className="table h-[30px] w-full table-fixed border-b border-dotted border-[#b5b5b5] bg-[#f0f0f0] text-[#333]">
                {heads.map((h) => (
                  <th key={h} className="border-r border-dotted border-[#cfcfcf] p-0 pl-[13px] pr-[7px] text-left font-normal">
                    <span className="flex items-center justify-between whitespace-nowrap">{h}
                      <svg width="13" height="14" viewBox="0 0 13 14" fill="none" stroke="#555" strokeWidth="1.300"><path d="M1 4l3-3v12M9 1v12l3-3" /></svg>
                    </span>
                  </th>
                ))}
              </tr>
            </thead>
            <tbody className="block bg-[#e3f5ff] pr-[11px] text-[#1a63b4]">
              {results.map(([id, v]) => (
                <tr key={id} className="table h-[31px] w-full table-fixed nth-[3n]:h-[30px]">
                  {[id, "位号", "顶层丝印层", v, "否", "否", "0mil", "默认", "5mil", "30mil", "0", "否", "左下", id, "#000000"].map((c, i) => (
                    <td key={i} className="whitespace-nowrap border-r border-dashed border-[#c5d2da] p-0 pl-[12px]">{c}</td>
                  ))}
                </tr>
              ))}
            </tbody>
          </table>
          <div className="absolute bottom-0 right-0 top-[31px] w-[10px] bg-[#f4f4f4]"><div className="h-[57px] rounded-full bg-[#bdbdbd]" /></div>
        </div>
        <div className="w-[10px] rounded-full bg-[#bdbdbd]" />
      </div>
      <footer className="flex h-[53px] items-start bg-[#f0f0f0] text-[16px] text-[#222]">
        <div className="mt-[12px] flex h-[32px] border-t border-[#dcdcdc]">
          <span className="flex w-[46px] items-center justify-center border-r border-[#c9c9c9] pl-[6px]"><Pin /></span>
          {["库", "日志", "DRC"].map((t) => <button key={t} className="w-[95px] border-b border-r border-[#c9c9c9]">{t}</button>)}
          <button className="w-[113px] border-b border-r border-[#c9c9c9] bg-white font-medium text-[#1a73d6]">查找结果</button>
        </div>
        <div className="ml-auto mt-[21px] flex h-[24px] items-center pr-[7px]">
          <Sel label="每页条数" value="50条/页" className="h-full w-[119px]" />
          <span className="ml-[11px] whitespace-nowrap">共 2 页， 78 条记录</span>
          <button aria-label="上一页" className="ml-[6px] flex h-full w-[23px] items-center justify-center border border-[#cfcfcf] text-[#999]"><ChevronLeft size={16} /></button>
          <input aria-label="页码" defaultValue="1" className="ml-[5px] h-full w-[39px] border border-[#cfcfcf] text-center outline-none" />
          <button aria-label="下一页" className="ml-[5px] flex h-full w-[23px] items-center justify-center border border-[#cfcfcf] bg-white text-[#1a73d6]"><ChevronRight size={16} /></button>
        </div>
      </footer>
      <div className="flex h-[3px] bg-[#2b2b2b]"><span className="ml-[64px] w-[384px] bg-[#d8d8d8]" /></div>
    </section>
  );
}

/* ---------- find dialog ---------- */

const findRows: [string, string, boolean][] = [
  ["属性名", "位号", true], ["图层", "顶层丝印层", true], ["属性值", "C11", false], ["镜像", "否", true],
  ["反相", "否", true], ["反相扩展", "0mil", false], ["字体", "默认", true], ["线宽", "5mil", false],
];
const GRID = "grid grid-cols-[133px_132px_265px_1fr] items-center pl-[13px]";

function FindDialog() {
  return (
    <div className="pointer-events-none absolute inset-x-0 top-[367px] flex justify-center pl-[2px]">
      <div role="dialog" aria-label="查找" className="pointer-events-auto w-[773px] overflow-hidden rounded-[3px] bg-white text-[16px] text-[#222] shadow-[0_4px_16px_rgba(0,0,0,0.35)]">
        <div className="flex h-[36px] items-center justify-between bg-[#f0f0f0] pl-[21px] pr-[15px]">
          <h2>查找</h2>
          <button aria-label="关闭"><X size={18} strokeWidth={1.600} /></button>
        </div>
        <div className="px-[21px] pb-[20px] pt-[23px]">
          <div className="flex h-[84px] items-center border border-[#dcdcdc] pl-[40px]">
            <span className="w-[75px]">种类：</span>
            <Sel label="种类" value="元件属性" className="h-[28px] w-[273px]" />
            <Sel label="子类" value="元件属性-位号" className="ml-[27px] h-[28px] w-[273px]" />
          </div>
          <div className="relative mt-[27px] h-[557px] overflow-hidden border border-[#dcdcdc] pl-[27px] pr-[38px] pt-[6px]">
            <h3 className="flex h-[34px] items-center">属性</h3>
            <div className="flex h-[36px] items-center gap-[25px] pl-[13px]">
              {["使用通配符[*?]", "区分大小写", "使用表达式"].map((t) => (
                <label key={t} className="flex items-center gap-[5px]">
                  <input type="checkbox" className="size-[19px] appearance-none rounded-[2px] border border-[#aaa] bg-white" />{t}
                </label>
              ))}
            </div>
            <div className={GRID + " h-[52px]"}>
              <span>全部</span>
              <Sel label="全部条件" value="包含" className="h-[28px] w-[106px]" />
              <input aria-label="全部值" className="h-[24px] w-[238px] rounded-[2px] border border-[#cdcdcd] px-[12px] outline-none" />
              <Sel label="画布显示" value="不限" className="h-[28px] w-[107px]" />
            </div>
            <div className={GRID + " mt-[2px] mb-[5px] h-[34px] bg-[#dddddd]"}>
              <span>属性名</span><span>条件</span><span>属性值</span><span>画布显示</span>
            </div>
            {findRows.map(([n, v, sel]) => (
              <div key={n} className={GRID + " h-[49px]"}>
                <span>{n}</span>
                <Sel label={n + "条件"} value="不限" className="h-[28px] w-[106px]" />
                {sel
                  ? <Sel label={n} value={v} className="h-[28px] w-[238px]" />
                  : <input aria-label={n} defaultValue={v} className="h-[24px] w-[238px] rounded-[2px] border border-[#cdcdcd] px-[12px] outline-none" />}
              </div>
            ))}
            <div className="absolute inset-y-0 right-0 w-[11px] bg-[#f4f4f4]"><div className="h-[352px] rounded-full bg-[#bdbdbd]" /></div>
          </div>
          <div className="mt-[23px] flex justify-end gap-[22px] pr-px text-[#2070c8]">
            {["查找全部", "上一个", "下一个"].map((t) => <button key={t} className="h-[37px] w-[96px] rounded-[2px] border border-[#c9c9c9]">{t}</button>)}
            <button className="relative h-[37px] w-[96px] rounded-[2px] border border-[#1c5f50]">取消
              <svg width="22" height="30" viewBox="0 0 24 32" className="absolute left-[69px] top-[8px]">
                <path d="M8 3c2-2 4-1 4 1v9l1-2c1-1 3 0 3 1l1 1c2-1 3 0 3 2 2 0 3 1 2 6-1 5-3 9-9 9-4 0-6-3-10-10-2-3 1-4 3-2l2 2z" fill="#0fd0a0" stroke="#111" strokeWidth="1.500" />
                <path d="M12 12v6M16 13v5M20 15v4" stroke="#111" strokeWidth="1.500" />
              </svg>
            </button>
          </div>
        </div>
      </div>
    </div>
  );
}

/* ---------- video overlays ---------- */

function Overlays() {
  return (
    <div className="pointer-events-none">
      <span className="absolute left-[66px] top-[76px] whitespace-nowrap text-[46px] leading-[56px] text-white opacity-60 [text-shadow:0_0_2px_#bbb]">立创EDA</span>
      <svg width="190" height="84" viewBox="0 0 190 84" fill="none" stroke="#f4f4f6" strokeWidth="7" strokeLinecap="round" className="absolute left-[287px] top-[46px] opacity-75 [filter:drop-shadow(0_0_1px_#aaa)]">
        <path d="M7 6l10 68M17 52c26-8 30 14 6 24M50 46l4 28M64 26l6 48M78 46l4 28M102 6l10 68M112 52c26-8 30 14 6 24M147 46l4 28M161 36l6 38M179 46l3 28" />
      </svg>
      <div className="absolute inset-x-0 top-[1206px] flex justify-center">
        <span className="bg-white px-[4px] text-[74px] font-medium leading-[79px] text-black [-webkit-text-stroke:2px_black]">对丝印整体进行修改</span>
      </div>
      <svg width="90" height="86" viewBox="0 0 90 86" className="absolute right-[53px] top-[1190px] [filter:drop-shadow(0_2px_3px_rgba(0,0,0,0.35))]">
        <path d="M29 7l6 12M60 7l-6 12" stroke="white" strokeWidth="7" strokeLinecap="round" />
        <rect x="4" y="15" width="82" height="66" rx="13" fill="white" fillOpacity="0.940" />
        <path d="M33 37q0-5 5-3l21 12q4 3 0 5L38 63q-5 2-5-3z" fill="#eef7fd" stroke="#9aa9b4" strokeWidth="2.500" />
      </svg>
    </div>
  );
}

export default function App() {
  return (
    <div className={"relative flex h-screen w-full flex-col overflow-hidden bg-[#efefef] " + UI}>
      <BrowserTabs />
      <AddressBar />
      <MenuBar />
      <Toolbar />
      <div className="flex min-h-0 flex-1">
        <LeftDock />
        <Splitter arrow="l" />
        <Editor />
        <Splitter arrow="r" />
        <RightDock />
      </div>
      <Results />
      <FindDialog />
      <Overlays />
      <div className="absolute inset-y-0 left-0 w-px bg-black" />
    </div>
  );
}
